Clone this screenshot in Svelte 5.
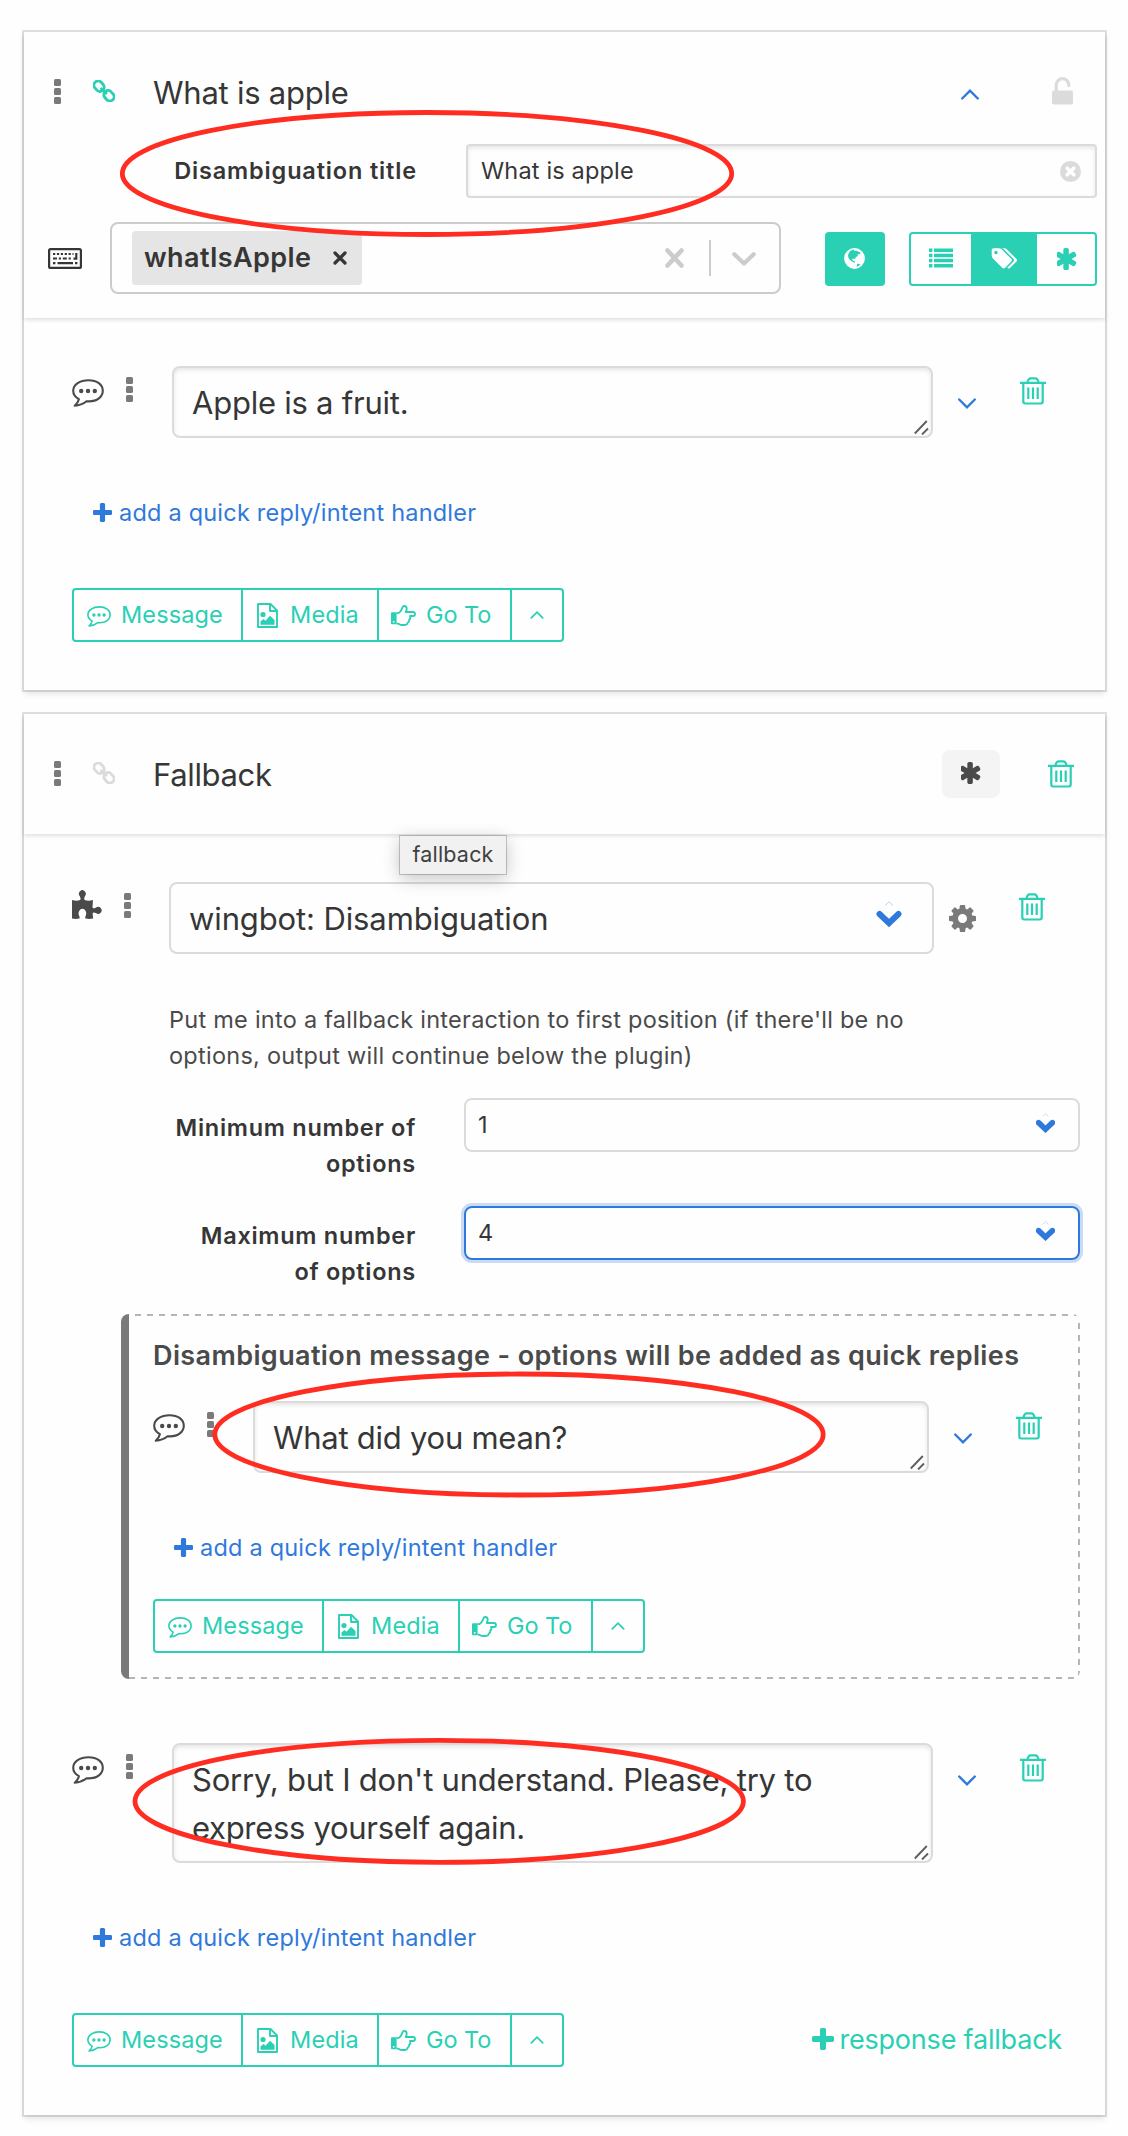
<script>
  const ASTERISK =
    'M1482 1050q46 26 59.5 77.5t-12.5 97.5l-64 110q-26 46-77.5 59.5t-97.5-12.5l-266-153v307q0 52-38 90t-90 38h-128q-52 0-90-38t-38-90v-307l-266 153q-46 26-97.5 12.5t-77.5-59.5l-64-110q-26-46-12.5-97.5t59.5-77.5l266-154-266-154q-46-26-59.5-77.5t12.5-97.5l64-110q26-46 77.5-59.5t97.5 12.5l266 153v-307q0-52 38-90t90-38h128q52 0 90 38t38 90v307l266-153q46-26 97.5-12.5t77.5 59.5l64 110q26 46 12.5 97.5t-59.5 77.5l-266 154z';
  const COG =
    'M1152 896q0-106-75-181t-181-75-181 75-75 181 75 181 181 75 181-75 75-181zm512-109v222q0 12-8 23t-20 13l-185 28q-19 54-39 91 35 50 107 138 10 12 10 25t-9 23q-27 37-99 108t-94 71q-12 0-26-9l-138-108q-44 23-91 38-16 136-29 186-7 28-36 28h-222q-14 0-24.5-8.5t-11.5-21.5l-28-184q-49-16-90-37l-141 107q-10 9-25 9-14 0-25-11-126-114-165-168-7-10-7-23 0-12 8-23 15-21 51-66.5t54-70.5q-27-50-41-99l-183-27q-13-2-21-12.5t-8-23.5v-222q0-12 8-23t19-13l186-28q14-46 39-92-40-57-107-138-10-12-10-24 0-10 9-23 26-36 98.5-107.5t94.5-71.5q13 0 26 10l138 107q44-23 91-38 16-136 29-186 7-28 36-28h222q14 0 24.5 8.5t11.5 21.5l28 184q49 16 90 37l142-107q9-9 24-9 13 0 25 10 129 119 165 170 7 8 7 22 0 12-8 23-15 21-51 66.5t-54 70.5q26 50 41 98l183 28q13 2 21 12.5t8 23.5z';
  const PLUS =
    'M1600 736v192q0 40-28 68t-68 28h-416v416q0 40-28 68t-68 28h-192q-40 0-68-28t-28-68v-416h-416q-40 0-68-28t-28-68v-192q0-40 28-68t68-28h416v-416q0-40 28-68t68-28h192q40 0 68 28t28 68v416h416q40 0 68 28t28 68z';
  const TAGS =
    'M576 448q0-53-37.5-90.5t-90.5-37.5-90.5 37.5-37.5 90.5 37.5 90.5 90.5 37.5 90.5-37.5 37.5-90.5zm1067 576q0 53-37 90l-491 492q-39 37-91 37-53 0-90-37l-715-716q-38-37-64.5-101t-26.5-117v-416q0-52 38-90t90-38h416q53 0 117 26.5t102 64.5l715 714q37 39 37 91zm384 0q0 53-37 90l-491 492q-39 37-91 37-36 0-59-14t-53-45l470-470q37-37 37-90 0-52-37-91l-715-714q-38-38-102-64.5t-117-26.5h224q53 0 117 26.5t102 64.5l715 714q37 39 37 91z';
</script>

{#snippet grip()}
  <span class="grip"><i></i><i></i><i></i></span>
{/snippet}

{#snippet chain()}
  <svg class="chain" viewBox="0 0 22 22" fill="none" stroke="currentColor" stroke-width="2.9">
    <rect x="0.5" y="2" width="11" height="8.4" rx="4" transform="rotate(48 6 6.2)" />
    <rect x="10.5" y="11.6" width="11" height="8.4" rx="4" transform="rotate(48 16 15.8)" />
    <path d="M7.5 8 14 14" stroke-width="2.4" />
  </svg>
{/snippet}

{#snippet comment()}
  <svg class="comment" viewBox="0 0 32 28">
    <path
      d="M16.5 1.2C25 1.2 30.8 5.6 30.8 11.8S25 22.4 17 22.4q-1.3 0-2.5-.2Q9.5 26.3 2.7 26.7 6 24 6.9 20.2 1.2 17 1.2 11.8C1.2 5.6 8 1.2 16.5 1.2Z"
      fill="none" stroke="currentColor" stroke-width="2.1" stroke-linejoin="round" />
    <g fill="currentColor"><circle cx="9.2" cy="12" r="2.2" /><circle cx="16" cy="12" r="2.2" /><circle cx="22.8" cy="12" r="2.2" /></g>
  </svg>
{/snippet}

{#snippet trash()}
  <svg class="trash" viewBox="0 0 26 28" fill="none" stroke="currentColor" stroke-width="2.2">
    <path d="M0 5.8H26M7.4 6Q8 1.3 10.8 1.3H15.2Q18 1.3 18.6 6" />
    <path d="M3.3 6V24.6Q3.3 26.5 5.2 26.5H20.8Q22.7 26.5 22.7 24.6V6" />
    <path d="M8.3 10.5V22M13 10.5V22M17.7 10.5V22" />
  </svg>
{/snippet}

{#snippet chevron(cls, up)}
  <svg class={cls} viewBox="0 0 18 11" fill="none" stroke="currentColor" stroke-width="2.4" stroke-linecap="round">
    <path d={up ? 'M1.2 9.5 9 1.7 16.8 9.5' : 'M1.2 1.5 9 9.3 16.8 1.5'} />
  </svg>
{/snippet}

{#snippet picker(cls, weight)}
  <svg class={cls} viewBox="0 0 26 27" fill="none">
    <path d="M9 4.5 13 .8 17 4.5" stroke="#a9c6ee" stroke-width=".8" />
    <path d="M3.5 13 13 22 22.5 13" stroke="#2f79dc" stroke-width={weight} stroke-linecap="round" />
  </svg>
{/snippet}

{#snippet plus()}
  <svg class="plus" viewBox="192 128 1408 1408"><path d={PLUS} fill="currentColor" /></svg>
{/snippet}

{#snippet asterisk()}
  <svg class="asterisk" viewBox="240 128 1312 1536"><path d={ASTERISK} fill="currentColor" /></svg>
{/snippet}

{#snippet message(lines, cls)}
  <div class="msg">
    {@render comment()}
    {@render grip()}
    <div class="textarea {cls}">
      {#each lines as line}<div>{line}</div>{/each}
      <svg class="resize" viewBox="0 0 15 15" stroke="#5f5f5f" stroke-width="1.9">
        <path d="M.8 13.5 12.8 1M8 14.5 14 8.5" />
      </svg>
    </div>
    {@render chevron('chev', false)}
    {@render trash()}
  </div>
  <div class="quick">{@render plus()}<span>add a quick reply/intent handler</span></div>
{/snippet}

{#snippet actions()}
  <div class="actions">
    <div class="act a1">{@render comment()}<span class="message">Message</span></div>
    <div class="act a2">
      <svg class="image" viewBox="0 0 21 25">
        <path d="M1 1H13.5L20 7.5V24H1ZM13 1V8H20" fill="none" stroke="currentColor" stroke-width="1.9" stroke-linejoin="round" />
        <circle cx="6" cy="11.5" r="2.6" fill="currentColor" />
        <path d="M3.5 21.8V18.5L6.5 16 8.5 17.8 13 12.8 17.5 17V21.8Z" fill="currentColor" />
      </svg>
      <span class="media">Media</span>
    </div>
    <div class="act a3">
      <svg class="hand" viewBox="0 0 25 21">
        <path d="M0 8.2Q0 7.2 1 7.2H5.6V19.2H1Q0 19.2 0 18.2Z" fill="currentColor" />
        <circle cx="2.7" cy="16.8" r=".9" fill="#fff" />
        <path
          d="M5.6 8.2H7.2Q8.5 7.8 10 5.4 11 4 11.4 2.5 11.9 1 13.3 1 15.7 1 15.7 3.6 15.7 5.2 14.7 7H22Q24 7 24 9T22 11H19Q20 14 18.2 14.7 18.5 17 16.7 17.5 16.5 20 13.8 20H11.5Q9.5 20 7.8 18.9 6.8 18.4 5.6 18.4"
          fill="none" stroke="currentColor" stroke-width="1.8" stroke-linejoin="round" />
      </svg>
      <span class="goto">Go To</span>
    </div>
    <div class="act a4">{@render chevron('small', true)}</div>
  </div>
{/snippet}

<main>
  <section class="card">
    <header class="head tall">
      <div class="bar">
        {@render grip()}
        <span class="teal">{@render chain()}</span>
        <h2>What is apple</h2>
        {@render chevron('chev', true)}
        <svg class="lock" viewBox="0 0 21 28">
          <rect y="13.5" width="21" height="14" rx="2" fill="#dbdbdb" />
          <path d="M4.2 15V8A6.2 6.2 0 0 1 16.8 8V8.5" fill="none" stroke="#dbdbdb" stroke-width="3.2" stroke-linecap="round" />
        </svg>
      </div>

      <div class="titlefield">
        <div class="caption">Disambiguation title</div>
        <div class="input">
          <span>What is apple</span>
          <svg class="clear" viewBox="0 0 21 21">
            <circle cx="10.5" cy="10.5" r="10.5" fill="#dbdbdb" />
            <path d="M7.2 7.2 13.8 13.8M13.8 7.2 7.2 13.8" stroke="#fff" stroke-width="3.6" stroke-linecap="round" />
          </svg>
        </div>
      </div>

      <div class="intents">
        <svg class="keyboard" viewBox="0 0 34 21" fill="none" stroke="#363636">
          <rect x="1.1" y="1.1" width="31.8" height="18.8" rx="1.5" stroke-width="2.2" />
          <path d="M5 6H25.5" stroke-width="2.2" stroke-dasharray="2.2 1.7" />
          <path d="M5 10.5H24" stroke-width="2.2" stroke-dasharray="4 1.8 2.2 1.8" />
          <path d="M5 15.2H7.4M9.5 15.2H25M27 15.2H29.4M28.3 5V11.5M25.5 10.7H29.4" stroke-width="2.2" />
        </svg>
        <div class="multi">
          <div class="tag">
            <span>whatIsApple</span>
            <svg viewBox="0 0 14 14" stroke="#363636" stroke-width="3.2" stroke-linecap="round"><path d="M2 2 12 12M12 2 2 12" /></svg>
          </div>
          <svg class="wipe" viewBox="0 0 19 20" stroke="#ccc" stroke-width="4.6" stroke-linecap="round"><path d="M2.5 2.5 16.5 17.5M16.5 2.5 2.5 17.5" /></svg>
          <span class="rule"></span>
          <svg class="open" viewBox="0 0 24 14" fill="none" stroke="#ccc" stroke-width="4.2" stroke-linecap="round" stroke-linejoin="round"><path d="M2.3 2.3 12 11.5 21.7 2.3" /></svg>
        </div>
        <div class="globe">
          <svg viewBox="0 0 21 21">
            <circle cx="10.5" cy="10.5" r="10.4" fill="#fff" />
            <path
              d="M5.5 3.5Q8 1.6 10.5 1.6L10 3 12 2.5 14 3.5 16.5 4.5 15.5 6.5 13.5 6 14 8 12 9 11 11 9.5 10.5 8 11.5 9.5 13 11 13.5 10.5 15 9 14 6.5 12.5 4.5 10 4 7 5 5ZM13.5 15.5 16.5 16.5 13.8 18.6 12.5 18.8Z"
              fill="#29d0b4" />
          </svg>
        </div>
        <div class="modes">
          <div class="m1">
            <svg viewBox="0 0 24 19" fill="#29d0b4">
              {#each [0, 5.2, 10.3, 15.5] as y}
                <rect x="0" {y} width="3.4" height="3.5" /><rect x="5" {y} width="19" height="3.5" />
              {/each}
            </svg>
          </div>
          <div class="m2"><svg viewBox="0 128 2027 1536"><path d={TAGS} fill="#fff" fill-rule="evenodd" /></svg></div>
          <div class="m3">{@render asterisk()}</div>
        </div>
      </div>
    </header>

    <div class="body">
      {@render message(['Apple is a fruit.'], 'fruit')}
      <div class="foot">{@render actions()}</div>
    </div>
  </section>

  <section class="card">
    <header class="head short">
      <div class="bar">
        {@render grip()}
        <span class="pale">{@render chain()}</span>
        <h2 class="fb">Fallback</h2>
        <div class="star">{@render asterisk()}</div>
        {@render trash()}
      </div>
      <div class="tooltip">fallback</div>
    </header>

    <div class="body">
      <div class="plugin">
        <svg class="puzzle" viewBox="0 0 30 29">
          <path
            d="M0 10Q5 11.3 8 10 9.3 9.3 7.8 6.3A3.4 3.7 0 1 1 12.9 6.3Q11.5 9.3 12.8 10 16 11.3 21 10L20.5 17.3Q21 19.3 24 17.5A3.5 3.5 0 1 1 24 23.1Q21 21.5 20.6 23.5L21.2 28.6Q17 29.3 13.6 28.6 12.7 28 13.8 25.6A3.8 4.8 0 1 0 7 25.6Q8.2 28 7.3 28.6 4 29.3 0 28.6Z"
            fill="#4a4a4a" />
        </svg>
        {@render grip()}
        <div class="select big"><span>wingbot: Disambiguation</span>{@render picker('pick', 6)}</div>
        <svg class="cog" viewBox="128 128 1536 1536"><path d={COG} fill="#7a7a7a" fill-rule="evenodd" /></svg>
        {@render trash()}
      </div>

      <p class="hint">
        Put me into a fallback interaction to first position (if there'll be no<br />options, output will continue below the plugin)
      </p>

      <div class="field">
        <div class="caption">Minimum number of<br />options</div>
        <div class="select"><span>1</span>{@render picker('pick sm', 7.6)}</div>
      </div>
      <div class="field">
        <div class="caption">Maximum number<br />of options</div>
        <div class="select focus"><span>4</span>{@render picker('pick sm', 7.6)}</div>
      </div>

      <div class="nested">
        <h3>Disambiguation message - options will be added as quick replies</h3>
        {@render message(['What did you mean?'], 'mean')}
        <div class="foot">{@render actions()}</div>
      </div>

      {@render message(["Sorry, but I don't understand. Please, try to", 'express yourself again.'], 'sorry')}
      <div class="foot">
        {@render actions()}
        <div class="response">{@render plus()}<span>response fallback</span></div>
      </div>
    </div>
  </section>

  <svg class="marks" viewBox="0 0 1128 2136" fill="none" stroke="#ff2d21" stroke-width="4.8">
    <ellipse cx="427" cy="173.5" rx="304.7" ry="61" />
    <ellipse cx="519" cy="1434.5" rx="304.2" ry="60.5" />
    <ellipse cx="439.2" cy="1801.3" rx="304.2" ry="61" />
  </svg>
</main>

<style>
  :global(body) { background: #fefefe; }
  main {
    position: relative; box-sizing: border-box; width: 1128px; height: 2136px; padding: 32px 23px 0 24px;
    display: flex; flex-direction: column; gap: 24px; overflow: hidden;
    font-family: Inter, 'Liberation Sans', sans-serif; font-size: 23.5px; line-height: 36px; letter-spacing: 0.26px; color: #363636;
  }
  main :global(*) { box-sizing: border-box; }
  svg { display: block; flex: none; }
  h2, h3, p { margin: 0; font-weight: 400; }
  .card { background: #fefefe; box-shadow: 0 4px 6px rgba(10, 10, 10, 0.1), 0 0 0 2px rgba(10, 10, 10, 0.12); }

  .head { position: relative; box-shadow: 0 2px 4px rgba(10, 10, 10, 0.12); }
  .tall { height: 286px; padding-top: 30px; }
  .short { height: 120px; padding-top: 30px; }
  .bar { display: flex; align-items: center; height: 60px; padding: 0 32px 0 30px; }
  .bar h2 { flex: 1; margin-left: 38px; padding-top: 2px; font-size: 31px; letter-spacing: -0.24px; }
  .bar .fb { letter-spacing: -0.34px; }
  .bar .chev { margin: 4px 73px 0 0; }
  .teal { color: #29d0b4; margin: -3px 0 0 32px; }
  .pale { color: #dbdbdb; margin: -3px 0 0 32px; }
  .chain { width: 22px; height: 22px; }
  .grip { flex: none; display: flex; flex-direction: column; gap: 2px; width: 7px; }
  .grip i { height: 7px; border-radius: 1.5px; background: #7a7a7a; }
  .bar .grip { margin-top: -1px; }
  .lock { width: 21px; height: 28px; margin-top: -3px; }

  .titlefield { display: flex; margin-top: 22px; padding-right: 8px; }
  .titlefield .caption { width: 393px; line-height: 54px; letter-spacing: 0.84px; }
  .caption { font-weight: 600; text-align: right; letter-spacing: 0.72px; }
  .input {
    flex: 1; margin-left: 49px; height: 54px; display: flex; align-items: center; justify-content: space-between; padding: 0 14px 0 13px;
    border: 2px solid #dbdbdb; border-radius: 4px; box-shadow: inset 0 2px 4px rgba(10, 10, 10, 0.1);
  }
  .input span { letter-spacing: 0.17px; }
  .clear { width: 21px; height: 21px; }

  .intents { display: flex; align-items: center; height: 72px; margin-top: 24px; padding: 0 8px 0 24px; }
  .keyboard { width: 34px; height: 21px; }
  .multi { display: flex; align-items: center; width: 671px; height: 72px; margin-left: 28px; padding-left: 20px; border: 2px solid #ccc; border-radius: 8px; }
  .tag { display: flex; align-items: center; width: 230px; height: 54px; padding-left: 12px; border-radius: 4px; background: #e5e5e5; font-weight: 600; font-size: 27px; letter-spacing: 0.4px; }
  .tag span { width: 189px; line-height: 52px; }
  .tag svg { width: 14px; height: 14px; }
  .wipe { width: 19px; height: 20px; margin-left: 303px; }
  .rule { width: 2px; height: 36px; margin-left: 25px; background: #ccc; }
  .open { width: 24px; height: 14px; margin: 2px 0 0 21px; }
  .globe { display: grid; place-items: center; width: 60px; height: 54px; margin: 2px 24px 0 44px; padding: 0 2px 1px 0; border-radius: 4px; background: #29d0b4; }
  .globe svg { width: 21px; height: 21px; }
  .modes { display: flex; width: 188px; height: 54px; margin-top: 2px; border: 2px solid #29d0b4; border-radius: 4px; color: #29d0b4; }
  .modes div { display: grid; place-items: center; }
  .m1 { width: 60px; padding-bottom: 2px; }
  .m1 svg { width: 24px; height: 20px; }
  .m2 { width: 66px; padding: 0 2px 1px 0; background: #29d0b4; }
  .m2 svg { width: 27px; height: 21px; }
  .m3 { flex: 1; padding: 0 0 1px 1px; }
  .asterisk { width: 20px; height: 22px; }

  .body { padding: 48px 59px 48px 48px; }
  .msg, .plugin { display: flex; align-items: flex-start; }
  .comment { width: 32px; height: 28px; margin-top: 13px; color: #4a4a4a; }
  .msg .grip { margin: 11px 39px 0 22px; }
  .textarea {
    position: relative; flex: 1; min-height: 72px; padding: 11px 18px 9px; border: 2px solid #dbdbdb; border-radius: 8px;
    box-shadow: inset 0 2px 4px rgba(10, 10, 10, 0.1); font-size: 31px; line-height: 48px; letter-spacing: -0.24px; white-space: nowrap;
  }
  .sorry { letter-spacing: -0.22px; }
  .sorry div + div { letter-spacing: -0.31px; }
  .mean { letter-spacing: -0.26px; }
  .resize { position: absolute; right: 2px; bottom: 1px; width: 15px; height: 15px; }
  .chev { width: 18px; height: 11px; color: #2f79dc; }
  .msg .chev { margin: 31.5px 44px 0 25px; }
  .trash { width: 26px; height: 28px; color: #29d0b4; }
  .msg .trash, .plugin .trash { margin-top: 10.5px; }

  .quick { display: flex; align-items: center; height: 36px; margin: 57px 0 57px 21px; color: #2f79dc; letter-spacing: 0.21px; }
  .plus { width: 19px; height: 19px; margin: -2px 7px 0 0; }
  .foot { display: flex; align-items: center; justify-content: space-between; }
  .actions { display: flex; width: 492px; height: 54px; border: 2px solid #29d0b4; border-radius: 4px; color: #29d0b4; letter-spacing: 0.31px; }
  .act { display: flex; align-items: center; border-right: 2px solid #29d0b4; }
  .a1 { width: 169px; padding-left: 13px; }
  .a2 { width: 136px; padding-left: 14px; }
  .a3 { width: 133px; padding-left: 12px; }
  .a4 { flex: 1; justify-content: center; border: 0; }
  .act .comment { width: 24px; height: 21px; margin: 2px 10px 0 0; color: #29d0b4; }
  .message { letter-spacing: 0.1px; }
  .image { width: 21px; height: 25px; margin-right: 12px; }
  .media { letter-spacing: 0.15px; }
  .hand { width: 25px; height: 21px; margin-right: 10px; }
  .goto { letter-spacing: -0.05px; }
  .small { width: 14px; height: 8px; }
  .response { display: flex; align-items: center; margin-right: -16px; font-size: 27px; letter-spacing: -0.2px; color: #29d0b4; }
  .response .plus { width: 22px; height: 22px; margin: -3px 5px 0 0; }

  .short .bar { padding-right: 31px; }
  .short .trash { margin-left: 48px; }
  .star { display: grid; place-items: center; width: 58px; height: 48px; padding-bottom: 3px; border-radius: 8px; background: #f4f4f4; color: #4a4a4a; }
  .tooltip {
    position: absolute; z-index: 1; left: 376px; top: 122px; width: 106px; height: 38px; background: #f1f1f1; color: #404040;
    font-size: 21.5px; line-height: 37px; letter-spacing: 0.2px; text-align: center;
    box-shadow: 0 0 0 1px rgba(0, 0, 0, 0.2), 0 4px 18px rgba(0, 0, 0, 0.24);
  }

  .puzzle { width: 30px; height: 29px; margin-top: 8px; }
  .plugin .grip { margin: 11px 38px 0 22px; }
  .select { display: flex; align-items: center; justify-content: space-between; width: 616px; height: 54px; padding: 0 23px 0 12px; border: 2px solid #dbdbdb; border-radius: 8px; }
  .select span { margin-top: -1px; }
  .big { width: 765px; height: 72px; padding: 0 30px 0 18px; font-size: 31px; letter-spacing: -0.12px; }
  .big span { margin-top: 1px; }
  .pick { width: 26px; height: 27px; margin-top: -8px; }
  .sm { width: 19px; height: 20px; margin-top: -5px; }
  .cog { width: 27px; height: 27px; margin: 23px 43px 0 15px; }
  .hint { margin: 48px 0 24px 97px; color: #4a4a4a; white-space: nowrap; }
  .field { display: flex; justify-content: space-between; margin: 0 -34px 24px 0; }
  .field .caption { width: 344px; padding-top: 12px; }
  .focus { border-color: #2f79dc; box-shadow: 0 0 0 3px rgba(50, 115, 220, 0.25); }

  /* Dashes are painted as 6px on / 6px off strips along three edges. */
  .nested {
    width: 959px; height: 365px; margin: 24px 0 64px 49px; padding: 24px 38px 24px 24px;
    border-left: 8px solid #7a7a7a; border-radius: 8px;
    background:
      repeating-linear-gradient(90deg, transparent 0 6px, #b5b5b5 6px 12px, transparent 12px 12.04px) top / 100% 2px no-repeat,
      repeating-linear-gradient(90deg, #b5b5b5 0 6px, transparent 6px 12.04px) bottom / 100% 2px no-repeat,
      repeating-linear-gradient(180deg, #b5b5b5 0 3px, transparent 3px 9px, #b5b5b5 9px 12px) right / 2px 100% no-repeat;
  }
  .nested h3 { margin-bottom: 27px; font-size: 27px; font-weight: 600; letter-spacing: 0.39px; color: #4a4a4a; white-space: nowrap; }
  .nested .quick { margin-bottom: 33px; }

  .marks { position: absolute; left: 0; top: 0; width: 1128px; height: 2136px; pointer-events: none; }
</style>
